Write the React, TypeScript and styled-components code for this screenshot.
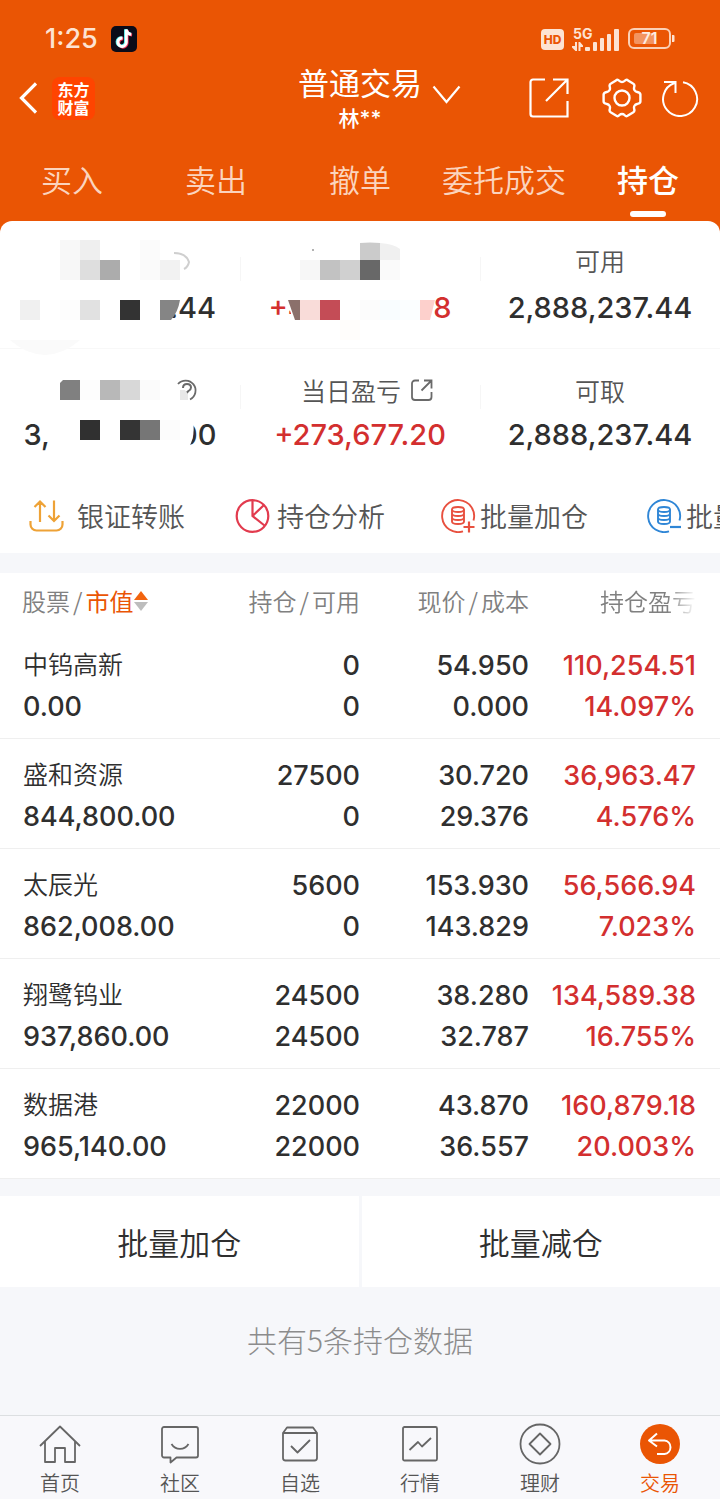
import React from "react";
import styled, { createGlobalStyle, css } from "styled-components";

const color = {
  brand: "#ea5504",
  red: "#d32f2f",
  ink: "#2f2f2f",
  label: "#555",
  muted: "#808080",
  canvas: "#f6f7fa",
  line: "#efefef",
};

const numeric = css`
  font-family: Inter, "Noto Sans CJK SC", sans-serif;
  font-weight: 500;
`;

const GlobalStyle = createGlobalStyle`
  * { box-sizing: border-box; }
  body {
    margin: 0;
    background: ${color.canvas};
    color: ${color.ink};
    font-family: "Noto Sans CJK SC", sans-serif;
  }
  button {
    border: 0;
    padding: 0;
    margin: 0;
    background: none;
    color: inherit;
    font: inherit;
    cursor: pointer;
  }
  svg { display: block; flex: none; }
`;

const Page = styled.div`
  display: flex;
  flex-direction: column;
  min-height: 100vh;
  overflow: hidden;
`;

/* ---------- header ---------- */

const Header = styled.header`
  background: ${color.brand};
  color: #fff;
  padding-bottom: 16px;
`;

const StatusBar = styled.div`
  display: flex;
  align-items: center;
  gap: 8px;
  height: 66px;
  padding: 12px 45px 0 45px;
  color: #fde3d3;
`;

const Clock = styled.time`
  ${numeric}
  font-size: 27px;
  line-height: 32px;
  margin-right: 5px;
`;

const StatusRight = styled.div`
  display: flex;
  align-items: center;
  gap: 8px;
  margin-left: auto;
`;

const TitleBar = styled.div`
  display: grid;
  grid-template-columns: 1fr auto 1fr;
  grid-template-rows: 64px;
  align-items: center;
`;

const TitleLeft = styled.div`
  display: flex;
  align-items: center;
  gap: 15px;
  padding-left: 19px;
`;

const Logo = styled.span`
  display: grid;
  place-content: center;
  width: 43px;
  height: 43px;
  border-radius: 8px;
  background: #ff4400;
  font-size: 16px;
  line-height: 18px;
  font-weight: 700;
  text-align: center;
`;

const Title = styled.h1`
  margin: 0;
  padding-top: 6px;
  font-size: 31px;
  line-height: 36px;
  font-weight: 400;
  text-align: center;
`;

const Account = styled.small`
  display: block;
  font-family: Inter, "Noto Sans CJK SC", sans-serif;
  font-size: 21px;
  line-height: 38px;
  font-weight: 500;
`;

const TitleRight = styled.div`
  display: flex;
  align-items: center;
  padding: 0 21px 0 10px;
`;

const AccountSwitch = styled.button`
  margin-bottom: 8px;
`;

const Tools = styled.div`
  display: flex;
  align-items: center;
  gap: 18px;
  margin-left: auto;
`;

const OpenButton = styled.button`
  margin-right: 14px;
`;

const Tabs = styled.nav`
  display: flex;
  height: 91px;
`;

const Tab = styled.button<{ $active?: boolean }>`
  position: relative;
  flex: 1;
  display: flex;
  justify-content: center;
  padding-top: 25px;
  font-size: 31px;
  line-height: 48px;
  font-weight: ${(p) => (p.$active ? 500 : 350)};
  color: ${(p) => (p.$active ? "#fff" : "#fbd4be")};
  white-space: nowrap;
  ${(p) =>
    p.$active &&
    css`
      &::after {
        content: "";
        position: absolute;
        left: 50%;
        bottom: 4px;
        width: 36px;
        height: 6px;
        margin-left: -18px;
        border-radius: 3px;
        background: #fff;
      }
    `}
`;

/* ---------- summary ---------- */

const Panel = styled.section`
  position: relative;
  margin-top: -16px;
  border-radius: 12px 12px 0 0;
  background: #fff;
`;

const Summary = styled.div`
  display: grid;
  grid-template-columns: repeat(3, 1fr);
`;

const Cell = styled.div<{ $second?: boolean }>`
  position: relative;
  display: flex;
  flex-direction: column;
  align-items: center;
  height: ${(p) => (p.$second ? 130 : 128)}px;
  padding-top: ${(p) => (p.$second ? 25 : 23)}px;
  gap: ${(p) => (p.$second ? 11 : 14)}px;
  border-bottom: 1px solid ${(p) => (p.$second ? "#fff" : "#f8f8f8")};
  background: linear-gradient(#f6f6f6, #f6f6f6) 0 36px / 1px 24px no-repeat;
  &:nth-child(3n + 1) {
    background: none;
  }
`;

const CellLabel = styled.span<{ $linked?: boolean }>`
  display: flex;
  align-items: center;
  gap: 10px;
  height: 32px;
  padding-left: ${(p) => (p.$linked ? 14 : 0)}px;
  font-size: 25px;
  line-height: 32px;
  font-weight: 350;
  color: ${color.label};
`;

const CellValue = styled.span<{ $up?: boolean }>`
  ${numeric}
  display: flex;
  justify-content: space-between;
  font-size: 29px;
  line-height: 36px;
  color: ${(p) => (p.$up ? color.red : color.ink)};
`;

const HiddenValue = styled(CellValue)<{ $width: number }>`
  width: ${(p) => p.$width}px;
`;

const Mosaic = styled.svg`
  position: absolute;
  top: 0;
  left: 50%;
  margin-left: -120px;
`;

const Actions = styled.div`
  display: flex;
  height: 74px;
  padding-left: 29px;
  overflow: hidden;
`;

const Action = styled.button<{ $gap: number }>`
  display: flex;
  align-items: center;
  flex: none;
  gap: ${(p) => p.$gap}px;
  width: 206px;
  font-size: 27px;
  line-height: 36px;
  font-weight: 350;
  color: ${color.label};
  white-space: nowrap;
`;

/* ---------- holdings ---------- */

const Holdings = styled.section`
  margin-top: 20px;
  background: #fff;
`;

const Table = styled.table`
  width: 100%;
  table-layout: fixed;
  border-collapse: collapse;
`;

const Col = styled.col<{ $w?: number }>`
  width: ${(p) => (p.$w ? `${p.$w}px` : "auto")};
`;

const Th = styled.th`
  height: 56px;
  padding: 0;
  font-size: 24px;
  line-height: 36px;
  font-weight: 350;
  text-align: right;
  color: ${color.muted};
  white-space: nowrap;
  &:first-child {
    padding-left: 22px;
    text-align: left;
  }
  &:last-child {
    padding-right: 24px;
  }
`;

const Slash = styled.span`
  margin: 0 3px;
`;

const SortButton = styled.button`
  display: inline-flex;
  align-items: center;
  gap: 1px;
  color: ${color.brand};
  font-weight: 400;
`;

const Fade = styled.span`
  mask-image: linear-gradient(to right, #000 70%, transparent 100%);
`;

const Td = styled.td<{ $up?: boolean }>`
  ${numeric}
  padding: 16px 0 11px;
  border-bottom: 1px solid ${color.line};
  font-size: 27px;
  line-height: 41px;
  text-align: right;
  color: ${(p) => (p.$up ? color.red : color.ink)};
  white-space: nowrap;
  &:first-child {
    padding-left: 23px;
    text-align: left;
  }
  &:last-child {
    padding-right: 24px;
  }
`;

const Line = styled.div`
  height: 41px;
`;

const StockName = styled(Line)`
  font-size: 25px;
  font-weight: 350;
`;

const BatchBar = styled.div`
  display: grid;
  grid-template-columns: 1fr 1fr;
  gap: 3px;
  margin-top: 17px;
`;

const BatchButton = styled.button`
  height: 91px;
  background: #fff;
  font-size: 31px;
  line-height: 40px;
  font-weight: 350;
`;

const Count = styled.p`
  flex: 1;
  margin: 0;
  padding: 32px 0 54px;
  font-size: 30px;
  line-height: 40px;
  font-weight: 200;
  text-align: center;
  color: #8c8c8c;
`;

const BottomNav = styled.nav`
  display: flex;
  height: 84px;
  border-top: 1px solid #dcdfe1;
  background: #f8f8fb;
`;

const NavLink = styled.a<{ $active?: boolean }>`
  flex: 1;
  display: flex;
  flex-direction: column;
  align-items: center;
  padding-top: 7px;
  gap: 4px;
  font-size: 20px;
  line-height: 28px;
  font-weight: 350;
  color: ${(p) => (p.$active ? color.brand : "#555")};
  text-decoration: none;
`;

/* ---------- icons ---------- */

const TikTokIcon = () => (
  <svg width="26" height="26" viewBox="0 0 26 26">
    <rect width="26" height="26" rx="5" fill="#0b0b18" />
    <g fill="none" strokeWidth="3">
      <path d="M11.500 12a4.200 4.200 0 1 0 3.800 4.200V3.500c.4 3 2.500 4.600 5 4.800" stroke="#f0305a" transform="translate(.8 .8)" />
      <path d="M11.500 12a4.200 4.200 0 1 0 3.800 4.200V3.500c.4 3 2.500 4.600 5 4.800" stroke="#3fe6e6" transform="translate(-.8 -.3)" />
      <path d="M11.500 12a4.200 4.200 0 1 0 3.800 4.200V3.500c.4 3 2.500 4.600 5 4.800" stroke="#fff" />
    </g>
  </svg>
);

const HdIcon = () => (
  <svg width="23" height="21" viewBox="0 0 23 21">
    <rect width="23" height="21" rx="4" fill="#fde3d3" />
    <text x="11.500" y="15" textAnchor="middle" fill="#ea5504" fontFamily="Inter, sans-serif" fontSize="12" fontWeight="800">HD</text>
  </svg>
);

const SignalIcon = () => (
  <svg width="48" height="28" viewBox="0 0 48 28" fill="#fde3d3">
    <text x="1" y="14" fontFamily="Inter, sans-serif" fontSize="14" fontWeight="700">5G</text>
    <path d="M0 21h3v-4h2v9H3.500L0 22.500zM6.500 17H8l3 3.500V22H8.500v4h-2z" />
    <rect x="13" y="22" width="5" height="4" rx="1" />
    <rect x="21" y="17" width="4" height="9" rx="1" />
    <rect x="28" y="13" width="4" height="13" rx="1" />
    <rect x="35" y="9" width="4" height="17" rx="1" />
    <rect x="42" y="4" width="5" height="22" rx="1" />
  </svg>
);

const BatteryIcon = () => (
  <svg width="47" height="22" viewBox="0 0 47 22">
    <rect x="1" y="1" width="41" height="19" rx="5" fill="none" stroke="#fbd0b6" strokeWidth="2" />
    <rect x="6" y="5" width="22" height="11" rx="2" fill="#f39460" />
    <path d="M44 7h1.500a1 1 0 0 1 1 1v5a1 1 0 0 1-1 1H44z" fill="#fde3d3" />
    <text x="21.500" y="16" textAnchor="middle" fill="#fdece2" fontFamily="Inter, sans-serif" fontSize="16" fontWeight="600">71</text>
  </svg>
);

const BackIcon = () => (
  <svg width="18" height="32" viewBox="0 0 18 32" fill="none" stroke="#fff" strokeWidth="3.200">
    <path d="M17 1.500 2.500 16 17 30.500" />
  </svg>
);

const ChevronIcon = () => (
  <svg width="29" height="19" viewBox="0 0 29 19" fill="none" stroke="#fff" strokeWidth="2.200">
    <path d="M1.500 1.500 14.500 17 27.500 1.500" />
  </svg>
);

const OpenIcon = () => (
  <svg width="40" height="40" viewBox="0 0 40 40" fill="none" stroke="#fff" strokeWidth="2.200">
    <path d="M16 1.500H4A2.500 2.500 0 0 0 1.500 4v32A2.500 2.500 0 0 0 4 38.500h34.500V23M24 1.500h14.500V16M38 2 17 23" />
  </svg>
);

const GearIcon = () => (
  <svg width="42" height="40" viewBox="0 0 42 40" fill="none" stroke="#fff" strokeWidth="2.400" strokeLinejoin="round">
    <path d="M15 2.500c1.500-1.500 2.500-.5 3.500.5a3.500 3.500 0 0 0 5 0c1-1 2-2 3.500-.5l5 3c2 1 1.500 2.500 1.200 3.500-.7 2.500.5 4.500 3 5 1.500.3 3 .7 3.200 2.500v7c0 2-1.700 2.200-3.200 2.500-2.500.5-3.700 2.500-3 5 .3 1 .8 2.500-1.200 3.500l-5 3c-1.500 1.500-2.500.5-3.500-.5a3.500 3.500 0 0 0-5 0c-1 1-2 2-3.500.5l-5-3c-2-1-1.500-2.500-1.200-3.500.7-2.500-.5-4.500-3-5-1.500-.3-3.200-.5-3.200-2.500v-7c.2-1.800 1.700-2.200 3.200-2.500 2.500-.5 3.700-2.500 3-5-.3-1-.8-2.500 1.200-3.500z" />
    <circle cx="21" cy="20" r="7.500" />
  </svg>
);

const RefreshIcon = () => (
  <svg width="38" height="38" viewBox="0 0 38 38" fill="none" stroke="#fff" strokeWidth="2">
    <path d="M22 3.300A17 17 0 1 1 13.500 4M3 3h11.500v11" />
  </svg>
);

const ShareIcon = () => (
  <svg width="22" height="22" viewBox="0 0 22 22" fill="none" stroke="#6a6a6a" strokeWidth="1.800">
    <path d="M8 1.500H4A3 3 0 0 0 1 4.500V18a3 3 0 0 0 3 3h13.500a3 3 0 0 0 3-3v-5M13 1.500h7.500v8M20 2 10.500 11.500" />
  </svg>
);

const TransferIcon = () => (
  <svg width="35" height="34" viewBox="0 0 35 34" fill="none" stroke="#eea236" strokeWidth="2.200">
    <path d="M1.500 22v3.500a6 6 0 0 0 6 6h20a6 6 0 0 0 6-6V22" />
    <path d="M11 23V2.500M5.500 8 11 2.500 16.500 8M25 1.500V22M19.500 16.500 25 22l5.500-5.500" />
  </svg>
);

const PieIcon = () => (
  <svg width="35" height="34" viewBox="0 0 35 34" fill="none" stroke="#e23b4e" strokeWidth="2.200">
    <circle cx="17.500" cy="17" r="15.800" />
    <path d="M17.500 1v16l12 9.500M17.500 17 29 6" />
  </svg>
);

const StackIcon = ({ stroke, plus }: { stroke: string; plus?: boolean }) => (
  <svg width="35" height="34" viewBox="0 0 35 34" fill="none" stroke={stroke} strokeWidth="1.900">
    <path d="M22 32.300A16 16 0 1 1 32.500 21.500" />
    <ellipse cx="17" cy="10.500" rx="6" ry="2.500" />
    <path d="M11 10.500v12c0 3.300 12 3.300 12 0v-12M11 14.500c0 3.300 12 3.300 12 0M11 18.500c0 3.300 12 3.300 12 0" />
    <path d={plus ? "M22.500 28h11M28 22.500v11" : "M23 28h11"} strokeWidth="2.200" />
  </svg>
);

const SortIcon = () => (
  <svg width="14" height="20" viewBox="0 0 14 20">
    <path d="M7 0 14 9H0z" fill="#f2640f" />
    <path d="M7 20 14 11H0z" fill="#bdbdbd" />
  </svg>
);

const NavSvg = styled.svg.attrs({ width: 42, height: 42, viewBox: "0 0 42 42" })`
  fill: none;
  stroke: #666;
  stroke-width: 1.8px;
  stroke-linejoin: round;
`;

const icons: Record<string, React.ReactNode> = {
  home: (
    <NavSvg>
      <path d="M1 23 21 3.500 41 23M6 18.500v20.500h10V25h10v14h10V18.500" />
    </NavSvg>
  ),
  community: (
    <NavSvg>
      <path d="M5 4h32a2 2 0 0 1 2 2v26.500a2 2 0 0 1-2 2H17.500l-6 5v-5H5a2 2 0 0 1-2-2V6a2 2 0 0 1 2-2z" />
      <path d="M12.500 21c4 6.500 13 6.500 17 0" />
    </NavSvg>
  ),
  watch: (
    <NavSvg>
      <path d="M4 10v25a2.500 2.500 0 0 0 2.500 2.500h29A2.500 2.500 0 0 0 38 35V10zM4 10 8 4.500h26l4 5.500M12 23l6.500 6.500L31 17" />
    </NavSvg>
  ),
  market: (
    <NavSvg>
      <rect x="4" y="4" width="34" height="33.500" rx="1.500" />
      <path d="M10.500 27 19 19l4 4.500 9-8.500" />
    </NavSvg>
  ),
  wealth: (
    <NavSvg>
      <circle cx="21" cy="21" r="19.500" />
      <path d="M21 10.500 31.500 21 21 31.500 10.500 21z" />
    </NavSvg>
  ),
  trade: (
    <NavSvg>
      <circle cx="21" cy="21" r="20" fill="#ea5504" stroke="none" />
      <path d="M18 10.500 10 17.500l8 6M10 17.500h15.500a6.800 6.800 0 0 1 0 13.500H18" stroke="#fff" strokeWidth="2" />
    </NavSvg>
  ),
};

/* Pixelated blocks that hide private amounts: x, y, fill, each 20px square. */
type Block = [number, number, string];

const Blocks = ({ items }: { items: Block[] }) => (
  <>
    {items.map(([x, y, fill]) => (
      <rect key={`${x}-${y}`} x={x} y={y} width="20" height="20" fill={fill} />
    ))}
  </>
);

const AssetMosaic = () => (
  <Mosaic width="240" height="136" viewBox="0 0 240 136">
    <path d="M174 32q12 0 15 9-1 5-5 7" fill="none" stroke="#cfcfcf" strokeWidth="2" />
    <path d="M10 119h70q-35 30-70 0z" fill="#fafafa" />
    <path d="M160 79h20q-2 12-9 20h-11z" fill="#858585" />
    <Blocks
      items={[
        [60, 19, "#f8f8f8"], [80, 19, "#efefef"], [140, 19, "#fbfbfb"],
        [60, 39, "#f7f7f7"], [80, 39, "#dedede"], [100, 39, "#acacac"],
        [140, 39, "#fafafa"], [160, 39, "#f2f2f2"], [20, 79, "#f0f0f0"],
        [60, 79, "#fdfdfd"], [80, 79, "#e1e1e1"], [120, 79, "#333333"],
      ]}
    />
  </Mosaic>
);

const ProfitMosaic = () => (
  <Mosaic width="240" height="136" viewBox="0 0 240 136">
    <path d="M46 72h24v32H55L48 84z" fill="#fff" />
    <path d="M48 79h12v20h-5z" fill="#8b706b" />
    <path d="M120 22q10-1 20 0v17h-20z" fill="#cbcbcb" />
    <path d="M140 22q14 1 20 6v11h-20z" fill="#f0f0f0" />
    <path d="M180 79h15l-5 20h-10z" fill="#fdd0cc" />
    <circle cx="73" cy="29" r="1" fill="#999" />
    <Blocks
      items={[
        [60, 39, "#f7f7f7"], [80, 39, "#c2c2c2"], [100, 39, "#d0d0d0"],
        [120, 39, "#686868"], [140, 39, "#fafafa"], [60, 79, "#f9dcd9"],
        [80, 79, "#c44c56"], [120, 79, "#fcfcfc"], [140, 79, "#f9fdff"],
        [160, 79, "#fbfeff"], [100, 99, "#fffdfb"],
      ]}
    />
  </Mosaic>
);

const MarketValueMosaic = () => (
  <Mosaic width="240" height="128" viewBox="0 0 240 128">
    <path d="M178 35a10 10 0 1 1 12 15.500" fill="none" stroke="#6a6a6a" strokeWidth="1.800" />
    <path d="M183 39q0-4 4-4t4 3.500q0 2-2.500 3.500-2 1-2 3.500" fill="none" stroke="#6a6a6a" strokeWidth="2" />
    <path d="M180 41h5l3 4v6h-8z" fill="#e8e8e8" />
    <path d="M60 34l3-3h17v20H60z" fill="#808080" />
    <path d="M160 68h32q5 18-5 34h-27z" fill="#fff" />
    <Blocks
      items={[
        [80, 31, "#fdfdfd"], [100, 31, "#b8b8b8"], [120, 31, "#d8d8d8"],
        [140, 31, "#fbfbfb"], [80, 71, "#303030"], [120, 71, "#343434"],
        [140, 71, "#767676"], [160, 71, "#fcfcfc"],
      ]}
    />
  </Mosaic>
);

/* ---------- data ---------- */

const tabs = ["买入", "卖出", "撤单", "委托成交", "持仓"];

const actions = [
  { label: "银证转账", gap: 13, icon: <TransferIcon /> },
  { label: "持仓分析", gap: 7, icon: <PieIcon /> },
  { label: "批量加仓", gap: 4, icon: <StackIcon stroke="#e8503f" plus /> },
  { label: "批量减仓", gap: 4, icon: <StackIcon stroke="#2f86d6" /> },
];

const holdings = [
  ["中钨高新", "0.00", "0", "0", "54.950", "0.000", "110,254.51", "14.097%"],
  ["盛和资源", "844,800.00", "27500", "0", "30.720", "29.376", "36,963.47", "4.576%"],
  ["太辰光", "862,008.00", "5600", "0", "153.930", "143.829", "56,566.94", "7.023%"],
  ["翔鹭钨业", "937,860.00", "24500", "24500", "38.280", "32.787", "134,589.38", "16.755%"],
  ["数据港", "965,140.00", "22000", "22000", "43.870", "36.557", "160,879.18", "20.003%"],
];

const navItems = [
  ["home", "首页"],
  ["community", "社区"],
  ["watch", "自选"],
  ["market", "行情"],
  ["wealth", "理财"],
  ["trade", "交易"],
];

export default function App() {
  return (
    <Page>
      <GlobalStyle />
      <Header>
        <StatusBar>
          <Clock>1:25</Clock>
          <TikTokIcon />
          <StatusRight>
            <HdIcon />
            <SignalIcon />
            <BatteryIcon />
          </StatusRight>
        </StatusBar>
        <TitleBar>
          <TitleLeft>
            <button aria-label="返回">
              <BackIcon />
            </button>
            <Logo>
              东方
              <br />
              财富
            </Logo>
          </TitleLeft>
          <Title>
            普通交易
            <Account>林**</Account>
          </Title>
          <TitleRight>
            <AccountSwitch aria-label="切换账户">
              <ChevronIcon />
            </AccountSwitch>
            <Tools>
              <OpenButton aria-label="打开">
                <OpenIcon />
              </OpenButton>
              <button aria-label="设置">
                <GearIcon />
              </button>
              <button aria-label="刷新">
                <RefreshIcon />
              </button>
            </Tools>
          </TitleRight>
        </TitleBar>
        <Tabs>
          {tabs.map((t) => (
            <Tab key={t} $active={t === "持仓"}>
              {t}
            </Tab>
          ))}
        </Tabs>
      </Header>

      <Panel>
        <Summary>
          <Cell>
            <CellLabel />
            <HiddenValue $width={192}>
              <span />
              <span>.44</span>
            </HiddenValue>
            <AssetMosaic />
          </Cell>
          <Cell>
            <CellLabel />
            <HiddenValue $width={183} $up>
              <span>+4</span>
              <span>8</span>
            </HiddenValue>
            <ProfitMosaic />
          </Cell>
          <Cell>
            <CellLabel>可用</CellLabel>
            <CellValue>2,888,237.44</CellValue>
          </Cell>
          <Cell $second>
            <CellLabel />
            <HiddenValue $width={193}>
              <span>3,</span>
              <span>00</span>
            </HiddenValue>
            <MarketValueMosaic />
          </Cell>
          <Cell $second>
            <CellLabel $linked>
              当日盈亏
              <ShareIcon />
            </CellLabel>
            <CellValue $up>+273,677.20</CellValue>
          </Cell>
          <Cell $second>
            <CellLabel>可取</CellLabel>
            <CellValue>2,888,237.44</CellValue>
          </Cell>
        </Summary>
        <Actions>
          {actions.map((a) => (
            <Action key={a.label} $gap={a.gap}>
              {a.icon}
              {a.label}
            </Action>
          ))}
        </Actions>
      </Panel>

      <Holdings>
        <Table>
          <colgroup>
            <Col />
            <Col $w={144} />
            <Col $w={169} />
            <Col $w={191} />
          </colgroup>
          <thead>
            <tr>
              <Th>
                股票<Slash>/</Slash>
                <SortButton>
                  市值
                  <SortIcon />
                </SortButton>
              </Th>
              <Th>
                持仓<Slash>/</Slash>可用
              </Th>
              <Th>
                现价<Slash>/</Slash>成本
              </Th>
              <Th>
                <Fade>持仓盈亏</Fade>
              </Th>
            </tr>
          </thead>
          <tbody>
            {holdings.map(([name, value, held, usable, price, cost, profit, rate]) => (
              <tr key={name}>
                <Td>
                  <StockName>{name}</StockName>
                  <Line>{value}</Line>
                </Td>
                <Td>
                  <Line>{held}</Line>
                  <Line>{usable}</Line>
                </Td>
                <Td>
                  <Line>{price}</Line>
                  <Line>{cost}</Line>
                </Td>
                <Td $up>
                  <Line>{profit}</Line>
                  <Line>{rate}</Line>
                </Td>
              </tr>
            ))}
          </tbody>
        </Table>
      </Holdings>

      <BatchBar>
        <BatchButton>批量加仓</BatchButton>
        <BatchButton>批量减仓</BatchButton>
      </BatchBar>
      <Count>共有5条持仓数据</Count>

      <BottomNav>
        {navItems.map(([key, label]) => (
          <NavLink key={key} href={`#${key}`} $active={key === "trade"}>
            {icons[key]}
            {label}
          </NavLink>
        ))}
      </BottomNav>
    </Page>
  );
}
